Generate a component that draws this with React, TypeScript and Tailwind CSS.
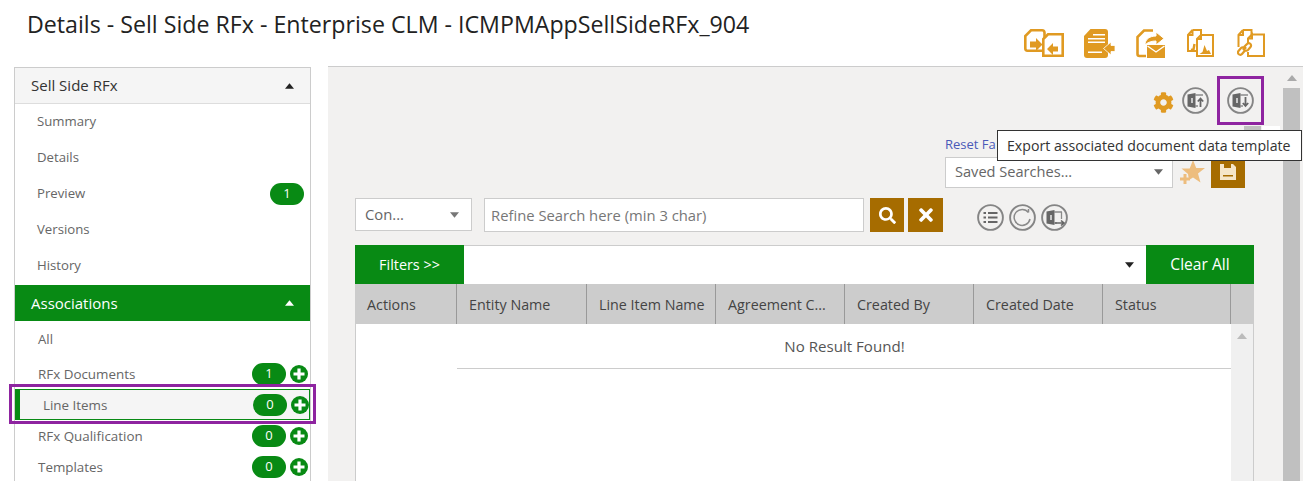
import { FaCog, FaSearch, FaTimes } from 'react-icons/fa'

const GREEN = '#088a14'
const FONT = "'Open Sans', 'Liberation Sans', sans-serif"

const DETAILS = [
  { label: 'Summary' },
  { label: 'Details' },
  { label: 'Preview', count: 1 },
  { label: 'Versions' },
  { label: 'History' },
]

const COLUMNS = [
  { label: 'Actions', w: 'w-[102px]' },
  { label: 'Entity Name', w: 'w-[130px]' },
  { label: 'Line Item Name', w: 'w-[129px]' },
  { label: 'Agreement C...', w: 'w-[129px]' },
  { label: 'Created By', w: 'w-[129px]' },
  { label: 'Created Date', w: 'w-[129px]' },
  { label: 'Status', w: 'w-[128px]' },
]

function Tri({ up, className }: { up?: boolean; className: string }) {
  return (
    <svg viewBox="0 0 10 6" className={className} fill="currentColor">
      <path d={up ? 'M5 0l5 6H0z' : 'M0 0h10L5 6z'} />
    </svg>
  )
}

function Pill({ n }: { n: number }) {
  return (
    <span className="w-[34px] h-[22px] rounded-full bg-[#088a14] text-white text-[13px] flex items-center justify-center">
      {n}
    </span>
  )
}

function PlusDot() {
  return (
    <svg viewBox="0 0 18 18" className="w-[18px] h-[18px] shrink-0">
      <circle cx="9" cy="9" r="9" fill={GREEN} />
      <path d="M9 3.500v11M3.500 9h11" stroke="#fff" strokeWidth="3.200" />
    </svg>
  )
}

function Docs1() {
  return (
    <svg viewBox="0 0 40 28" className="w-[40px] h-[28px]" fill="none" stroke="#e09a22" strokeWidth="2.600">
      <path d="M7 1.300h11a2.500 2.500 0 0 1 2.500 2.500V21.700H3.500a2.200 2.200 0 0 1-2.200-2.200V7z" />
      <path d="M6 12.500h6V9l6.500 6.500L12 22v-3.500H6z" fill="#e09a22" stroke="none" />
      <path d="M24 5.300h14.700v21.400H19.300V10z" fill="#fff" />
      <path d="M34 17.500h-5V14l-6 6 6 6v-3.500h5z" fill="#e09a22" stroke="none" />
    </svg>
  )
}

function Docs2() {
  return (
    <svg viewBox="0 0 31 29" className="w-[31px] h-[29px]">
      <path d="M6.500 0H21a3 3 0 0 1 3 3v23a3 3 0 0 1-3 3H3a3 3 0 0 1-3-3V7z" fill="#e09a22" />
      <path d="M9 5h12v1.600H9zM4 9h17v1.600H4zM4 12.500h17v1.600H4zM4 22.500h14v1.600H4z" fill="#fff" />
      <path d="M31 16.500v6h-4V26l-7.500-6.500L27 13v3.500z" fill="#e09a22" stroke="#fff" strokeWidth="0.800" />
    </svg>
  )
}

function Docs3() {
  return (
    <svg viewBox="0 0 29 29" className="w-[29px] h-[29px]" fill="none" stroke="#e09a22" strokeWidth="2.600">
      <path d="M17 1.500H8L1.500 8v17a2 2 0 0 0 2 2H10" />
      <path d="M9 16c0-6 5-9 11-9V3l8 6.500-8 6.500v-4c-4 0-8 1-11 4z" fill="#e09a22" stroke="#fff" strokeWidth="1" />
      <path d="M11 16h18v13H11z" fill="#e09a22" stroke="none" />
      <path d="M11.500 17l8.500 6 8.500-6" stroke="#fff" strokeWidth="1.400" />
    </svg>
  )
}

function Docs4() {
  return (
    <svg viewBox="0 0 27 28" className="w-[27px] h-[28px]" fill="none" stroke="#e09a22" strokeWidth="2">
      <path d="M5.500 1H14v6M5.500 1v5H1M5.500 1L1 6v16h8" />
      <path d="M4 21l2.500-.5L7.500 15" strokeWidth="2.400" />
      <path d="M14 6h12v21H10V10z" fill="#fff" />
      <path d="M14 6v4h-4" />
      <path d="M12.500 25l3-2 2-7 2.500 6 2-1 2 4z" fill="#e09a22" stroke="none" />
    </svg>
  )
}

function Docs5() {
  return (
    <svg viewBox="0 0 28 28" className="w-[28px] h-[28px]" fill="none" stroke="#e09a22" strokeWidth="2">
      <path d="M6 1h8.500v5M6 1v5H1.500M6 1L1.500 6v12" />
      <path d="M15 5.500h12V27H11v-4M11 14.500V9.500l4-4v4h-4" />
      <path d="M9 18l-3 3" strokeWidth="2.600" />
      <path d="M8 21.500l-3 3.500a2.300 2.300 0 0 1-3.500-3l2.500-3a2.400 2.400 0 0 1 3 0M7 18l3-3a2.300 2.300 0 0 1 3.500 3l-2.500 3a2.400 2.400 0 0 1-3 0" strokeWidth="2.200" />
    </svg>
  )
}

function Circle({ children }: { children: React.ReactNode }) {
  return (
    <svg viewBox="0 0 27 27" className="w-[27px] h-[27px] shrink-0">
      <circle cx="13.500" cy="13.500" r="12.400" fill="none" stroke="#858585" strokeWidth="1.900" />
      {children}
    </svg>
  )
}

function Book({ arrow }: { arrow: 'up' | 'down' | 'out' }) {
  return (
    <Circle>
      <path d="M5.500 7.500l8-1.500v15l-8-1.500z" fill="#666" />
      <path d="M9 11h2v5H9z" fill="#c8c8c8" />
      <path d="M13 8h8M13 19h3" stroke="#8a8a8a" strokeWidth="1.300" fill="none" />
      {arrow === 'up' && <path d="M18.500 20v-8M15.800 14.500l2.700-3 2.700 3" stroke="#666" strokeWidth="1.800" fill="none" />}
      {arrow === 'down' && <path d="M18.500 10v8.500M15.800 16l2.700 3 2.700-3" stroke="#666" strokeWidth="1.800" fill="none" />}
      {arrow === 'out' && (
        <>
          <path d="M20.500 8v7" stroke="#8a8a8a" strokeWidth="1.300" fill="none" />
          <path d="M14 19h8M20 16.500l3 2.500-3 2.500" stroke="#666" strokeWidth="1.600" fill="none" />
        </>
      )}
    </Circle>
  )
}

function NavRow({ label, n, active }: { label: string; n: number; active?: boolean }) {
  if (active) {
    return (
      <div className="relative h-[31px] flex items-center justify-between bg-[#f5f5f5] border border-[#088a14] border-l-[5px] pl-[23px] text-[13.400px] text-[#666]">
        <span className="mt-[1px]">{label}</span>
        <span className="flex items-center gap-[4px]">
          <Pill n={n} />
          <PlusDot />
        </span>
        <span className="absolute -left-[11px] -right-[7px] -top-[6px] -bottom-[5px] border-[3px] border-[#8e24a0]" />
      </div>
    )
  }
  return (
    <div className="h-[31px] flex items-center justify-between pl-[23px] pr-[2px] text-[13.400px] text-[#666]">
      <span className="mt-[1px]">{label}</span>
      <span className="flex items-center gap-[4px]">
        <Pill n={n} />
        <PlusDot />
      </span>
    </div>
  )
}

export default function App() {
  return (
    <div className="h-[481px] overflow-hidden bg-white text-[#444]" style={{ fontFamily: FONT }}>
      <div className="h-[66px] flex justify-between pl-[27px] pr-[38px]">
        <h1 className="text-[23.200px] text-[#222] leading-[28px] pt-[10px] whitespace-nowrap">
          Details - Sell Side RFx - Enterprise CLM - ICMPMAppSellSideRFx_904
        </h1>
        <div className="flex items-start pt-[29px]">
          <Docs1 />
          <div className="ml-[20px]"><Docs2 /></div>
          <div className="ml-[21px]"><Docs3 /></div>
          <div className="ml-[22px]"><Docs4 /></div>
          <div className="ml-[23px]"><Docs5 /></div>
        </div>
      </div>

      <div className="flex">
        <aside className="w-[297px] ml-[14px] mr-[17px] mt-px h-[500px] border border-[#ccc] shrink-0">
          <div className="h-[36px] bg-[#f5f5f5] border-b border-[#ddd] flex items-center justify-between pl-[16px] pr-[16px] text-[15px] text-[#333]">
            Sell Side RFx
            <Tri up className="w-[9px] h-[6px] text-[#222]" />
          </div>
          {DETAILS.map((d) => (
            <div key={d.label} className="h-[36px] flex items-center justify-between pl-[22px] pr-[6px] text-[13.200px] text-[#666]">
              <span>{d.label}</span>
              {d.count && <Pill n={d.count} />}
            </div>
          ))}
          <div className="mt-[1px] h-[36px] bg-[#088a14] flex items-center justify-between pl-[16px] pr-[16px] text-[15px] text-white">
            Associations
            <Tri up className="w-[9px] h-[6px] text-white" />
          </div>
          <div className="h-[37px] flex items-center pl-[23px] text-[13.200px] text-[#666]">All</div>
          <NavRow label="RFx Documents" n={1} />
          <NavRow label="Line Items" n={0} active />
          <NavRow label="RFx Qualification" n={0} />
          <NavRow label="Templates" n={0} />
        </aside>

        <main className="flex-1 h-[415px] bg-[#f2f1f0] border-t border-[#ccc] flex relative">
          <div className="flex-1 pl-[27px] pr-[29px]">
            <div className="h-[49px] mt-[9px] -mr-[10px] flex items-center justify-end">
              <FaCog className="w-[21px] h-[21px] text-[#e09a22] mr-[8px] mt-[4px]" />
              <Book arrow="up" />
              <div className="w-[47px] h-[49px] ml-[8px] border-[3px] border-[#8e24a0] flex items-center justify-center">
                <Book arrow="down" />
              </div>
            </div>

            <div className="mt-[10px] h-[52px] mr-[9px] flex flex-col items-start pl-[590px]">
              <a className="text-[13px] text-[#4a5ab8] leading-[18px]">Reset Fa</a>
              <div className="flex items-center mt-[3px]">
                <div className="w-[228px] h-[31px] bg-white border border-[#ccc] flex items-center justify-between pl-[9px] pr-[9px] text-[14.600px] text-[#666]">
                  Saved Searches...
                  <Tri className="w-[9px] h-[6px] text-[#666]" />
                </div>
                <svg viewBox="0 0 26 24" className="w-[26px] h-[24px] ml-[6px] shrink-0">
                  <path d="M14 0l3.200 8H26l-7 5.500 2.500 9L14 17.500 10 20l-1-6-6.500-5.500h8.200z" fill="#edbd7e" />
                  <path d="M6 14v10M1 19h10" stroke="#edbd7e" strokeWidth="3" />
                </svg>
                <div className="ml-[6px] -mt-[3px] w-[34px] h-[35px] bg-[#a66c00] flex items-center justify-center">
                  <svg viewBox="0 0 18 18" className="w-[18px] h-[18px] mt-[3px]">
                    <path d="M1 1h13l3 3v13H1z" fill="#f5e6c8" />
                    <path d="M5 1h7v4H5z" fill="#a66c00" />
                    <path d="M4 12h10v1.500H4z" fill="#a66c00" />
                  </svg>
                </div>
              </div>
            </div>

            <div className="mt-[11px] flex items-start">
              <div className="w-[117px] h-[33px] bg-white border border-[#ccc] flex items-center justify-between pl-[9px] pr-[12px] text-[14.800px] text-[#666]">
                Con...
                <Tri className="w-[9px] h-[6px] text-[#777]" />
              </div>
              <div className="ml-[12px] w-[380px] h-[34px] bg-white border border-[#ccc] flex items-center pl-[6px] text-[14.800px] text-[#777]">
                Refine Search here (min 3 char)
              </div>
              <button className="ml-[6px] w-[34px] h-[34px] bg-[#a66c00] flex items-center justify-center">
                <FaSearch className="w-[17px] h-[17px] text-white" />
              </button>
              <button className="ml-[4px] w-[35px] h-[34px] bg-[#a66c00] flex items-center justify-center">
                <FaTimes className="w-[16px] h-[20px] text-white" />
              </button>
              <div className="ml-[34px] mt-[6px] flex gap-[5px]">
                <Circle>
                  <path d="M6.500 9h2.500M6.500 13.500h2.500M6.500 18h2.500M11 9h9.500M11 13.500h9.500M11 18h9.500" stroke="#666" strokeWidth="2" fill="none" />
                </Circle>
                <Circle>
                  <path d="M19.500 8.500a8 8 0 1 0 1.500 6.500M19.500 8.500V5" stroke="#8a8a8a" strokeWidth="1.500" fill="none" />
                </Circle>
                <Book arrow="out" />
              </div>
            </div>

            <div className="mt-[13px]">
              <div className="h-[39px] bg-white border-t border-[#ccc] flex items-stretch">
                <div className="w-[109px] -mt-px bg-[#088a14] text-white text-[14.400px] flex items-center justify-center">Filters &gt;&gt;</div>
                <div className="flex-1 flex items-center justify-end pr-[12px]">
                  <Tri className="w-[9px] h-[6px] text-[#222]" />
                </div>
                <div className="w-[108px] -mt-px bg-[#088a14] text-white text-[15.600px] flex items-center justify-center">Clear All</div>
              </div>
              <div className="h-[40px] bg-[#ccc] flex text-[14.300px] text-[#444]">
                {COLUMNS.map((c) => (
                  <div key={c.label} className={`${c.w} border-r border-[#999] pl-[12px] flex items-center whitespace-nowrap overflow-hidden`}>
                    <span className="mt-[1px]">{c.label}</span>
                  </div>
                ))}
              </div>
              <div className="h-[160px] bg-white border-l border-r border-[#ccc] flex">
                <div className="flex-1 flex flex-col">
                  <div className="h-[44px] pl-[102px] flex items-center justify-center text-[15.100px] text-[#555]">
                    No Result Found!
                  </div>
                  <div className="ml-[101px] h-px bg-[#ccc]" />
                </div>
                <div className="w-[22px] bg-[#f0f0f0] flex justify-center pt-[9px]">
                  <Tri up className="w-[10px] h-[6px] text-[#bbb]" />
                </div>
              </div>
            </div>
          </div>

          <div className="w-[17px] mr-[3px] flex flex-col items-center shrink-0">
            <div className="h-[21px] flex items-center">
              <Tri up className="w-[10px] h-[6px] text-[#aaa]" />
            </div>
            <div className="flex-1 w-full bg-[#c0c0c0]" />
          </div>

          <div className="absolute left-[916px] top-[59px] w-[17px] h-[4px] bg-[#c0c0c0]" />
          <div className="absolute left-[934px] top-[59px] w-[18px] h-[4px] bg-white" />
          <div className="absolute left-[669px] top-[63px] w-[305px] h-[31px] bg-white border border-[#333] flex items-center pl-[9px] text-[14.150px] text-[#333] whitespace-nowrap">
            Export associated document data template
          </div>
        </main>
      </div>
    </div>
  )
}
